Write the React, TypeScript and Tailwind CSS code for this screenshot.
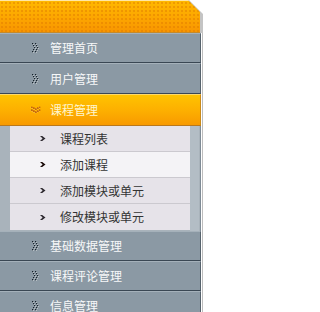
import React from 'react';

const DotArrows: React.FC<{ down?: boolean }> = ({ down }) => {
    const dots = [
        [0, 0], [1, 2], [2, 4], [1, 6], [0, 8],
        [3, 0], [4, 2], [5, 4], [4, 6], [3, 8],
    ];
    return (
        <svg width="7" height="10" viewBox="0 0 7 10" className={down ? 'rotate-90' : ''}>
            {dots.map(([x, y], i) => (
                <rect key={'h' + i} x={x + 0.7} y={y + 0.7} width="1.1" height="1.1" fill={down ? '#ffe27a' : '#eef2f5'} />
            ))}
            {dots.map(([x, y], i) => (
                <rect key={i} x={x} y={y} width="1.3" height="1.3" fill={down ? '#9c2a06' : '#16222c'} />
            ))}
        </svg>
    );
};

const SubArrow: React.FC<{ active?: boolean }> = ({ active }) => (
    <svg width="6" height="5" viewBox="0 0 6 5">
        <path d="M0 0H2.2L5.5 2.5L2.2 5H0L2.6 2.5Z" fill={active ? '#1a0a08' : '#2e2a30'} />
    </svg>
);

const MainRow: React.FC<{ label: string; h?: string }> = ({ label, h = 'h-[30px]' }) => (
    <div className={`${h} flex items-center bg-[#8b99a4] border-t border-[#a5b1ba] border-b border-b-[#3a4753] border-r border-r-[#56626c] pl-[32px]`}>
        <DotArrows />
        <span className="ml-[11px] text-[12px] text-[#f7f8f9]">{label}</span>
    </div>
);

const SubRow: React.FC<{ label: string; active?: boolean; last?: boolean }> = ({ label, active, last }) => (
    <div className={`h-[26px] flex items-center pl-[30px] ${active ? 'bg-[#f4f3f6]' : 'bg-[#e6e3e9]'} ${last ? '' : 'border-b border-[#cbc9cf]'}`}>
        <SubArrow active={active} />
        <span className="ml-[14px] text-[12px] text-[#333333]">{label}</span>
    </div>
);

const App: React.FC = () => {
    return (
        <div className="w-[268px] h-[312px] overflow-hidden bg-white font-['Noto_Sans_CJK_SC','Noto_Sans',sans-serif]">
            <div className="w-[203px]">
                <div className="h-[33px] bg-[#c4c4c4] [clip-path:polygon(0_0,189px_0,203px_14px,203px_100%,0_100%)]">
                    <div className="h-[33px] w-[200px] border-t border-[#ffe7a6] border-b border-b-[#c58a2a] [clip-path:polygon(0_0,188px_0,200px_12px,200px_100%,0_100%)] [background-image:radial-gradient(circle,rgba(222,120,0,0.45)_0.8px,transparent_1.3px),linear-gradient(#ffb800,#fca400_60%,#f89600)] [background-size:4px_4px,100%_100%]" />
                </div>
                <div className="border-r border-[#bdbdbd] pr-px bg-white">
                    <MainRow label="管理首页" />
                    <MainRow label="用户管理" h="h-[31px]" />
                    <div className="h-[32px] flex items-center pl-[32px] bg-[linear-gradient(#ffc300,#fdae00_55%,#f89a00)] border-t border-[#ffd96a] border-b border-b-[#b9781c] border-r border-r-[#c98a1a]">
                        <DotArrows down />
                        <span className="ml-[11px] text-[12px] text-[#fff6cf]">课程管理</span>
                    </div>
                    <div className="flex h-[105px] bg-[#a9b3bb] border-r border-[#7f8b95]">
                        <div className="w-[10px]" />
                        <div className="w-[180px] flex flex-col">
                            <SubRow label="课程列表" />
                            <SubRow label="添加课程" active />
                            <SubRow label="添加模块或单元" />
                            <SubRow label="修改模块或单元" last />
                        </div>
                        <div className="w-[9px] bg-[#b3bdc5]" />
                    </div>
                    <MainRow label="基础数据管理" />
                    <MainRow label="课程评论管理" />
                    <MainRow label="信息管理" />
                </div>
            </div>
        </div>
    );
};

export default App;
